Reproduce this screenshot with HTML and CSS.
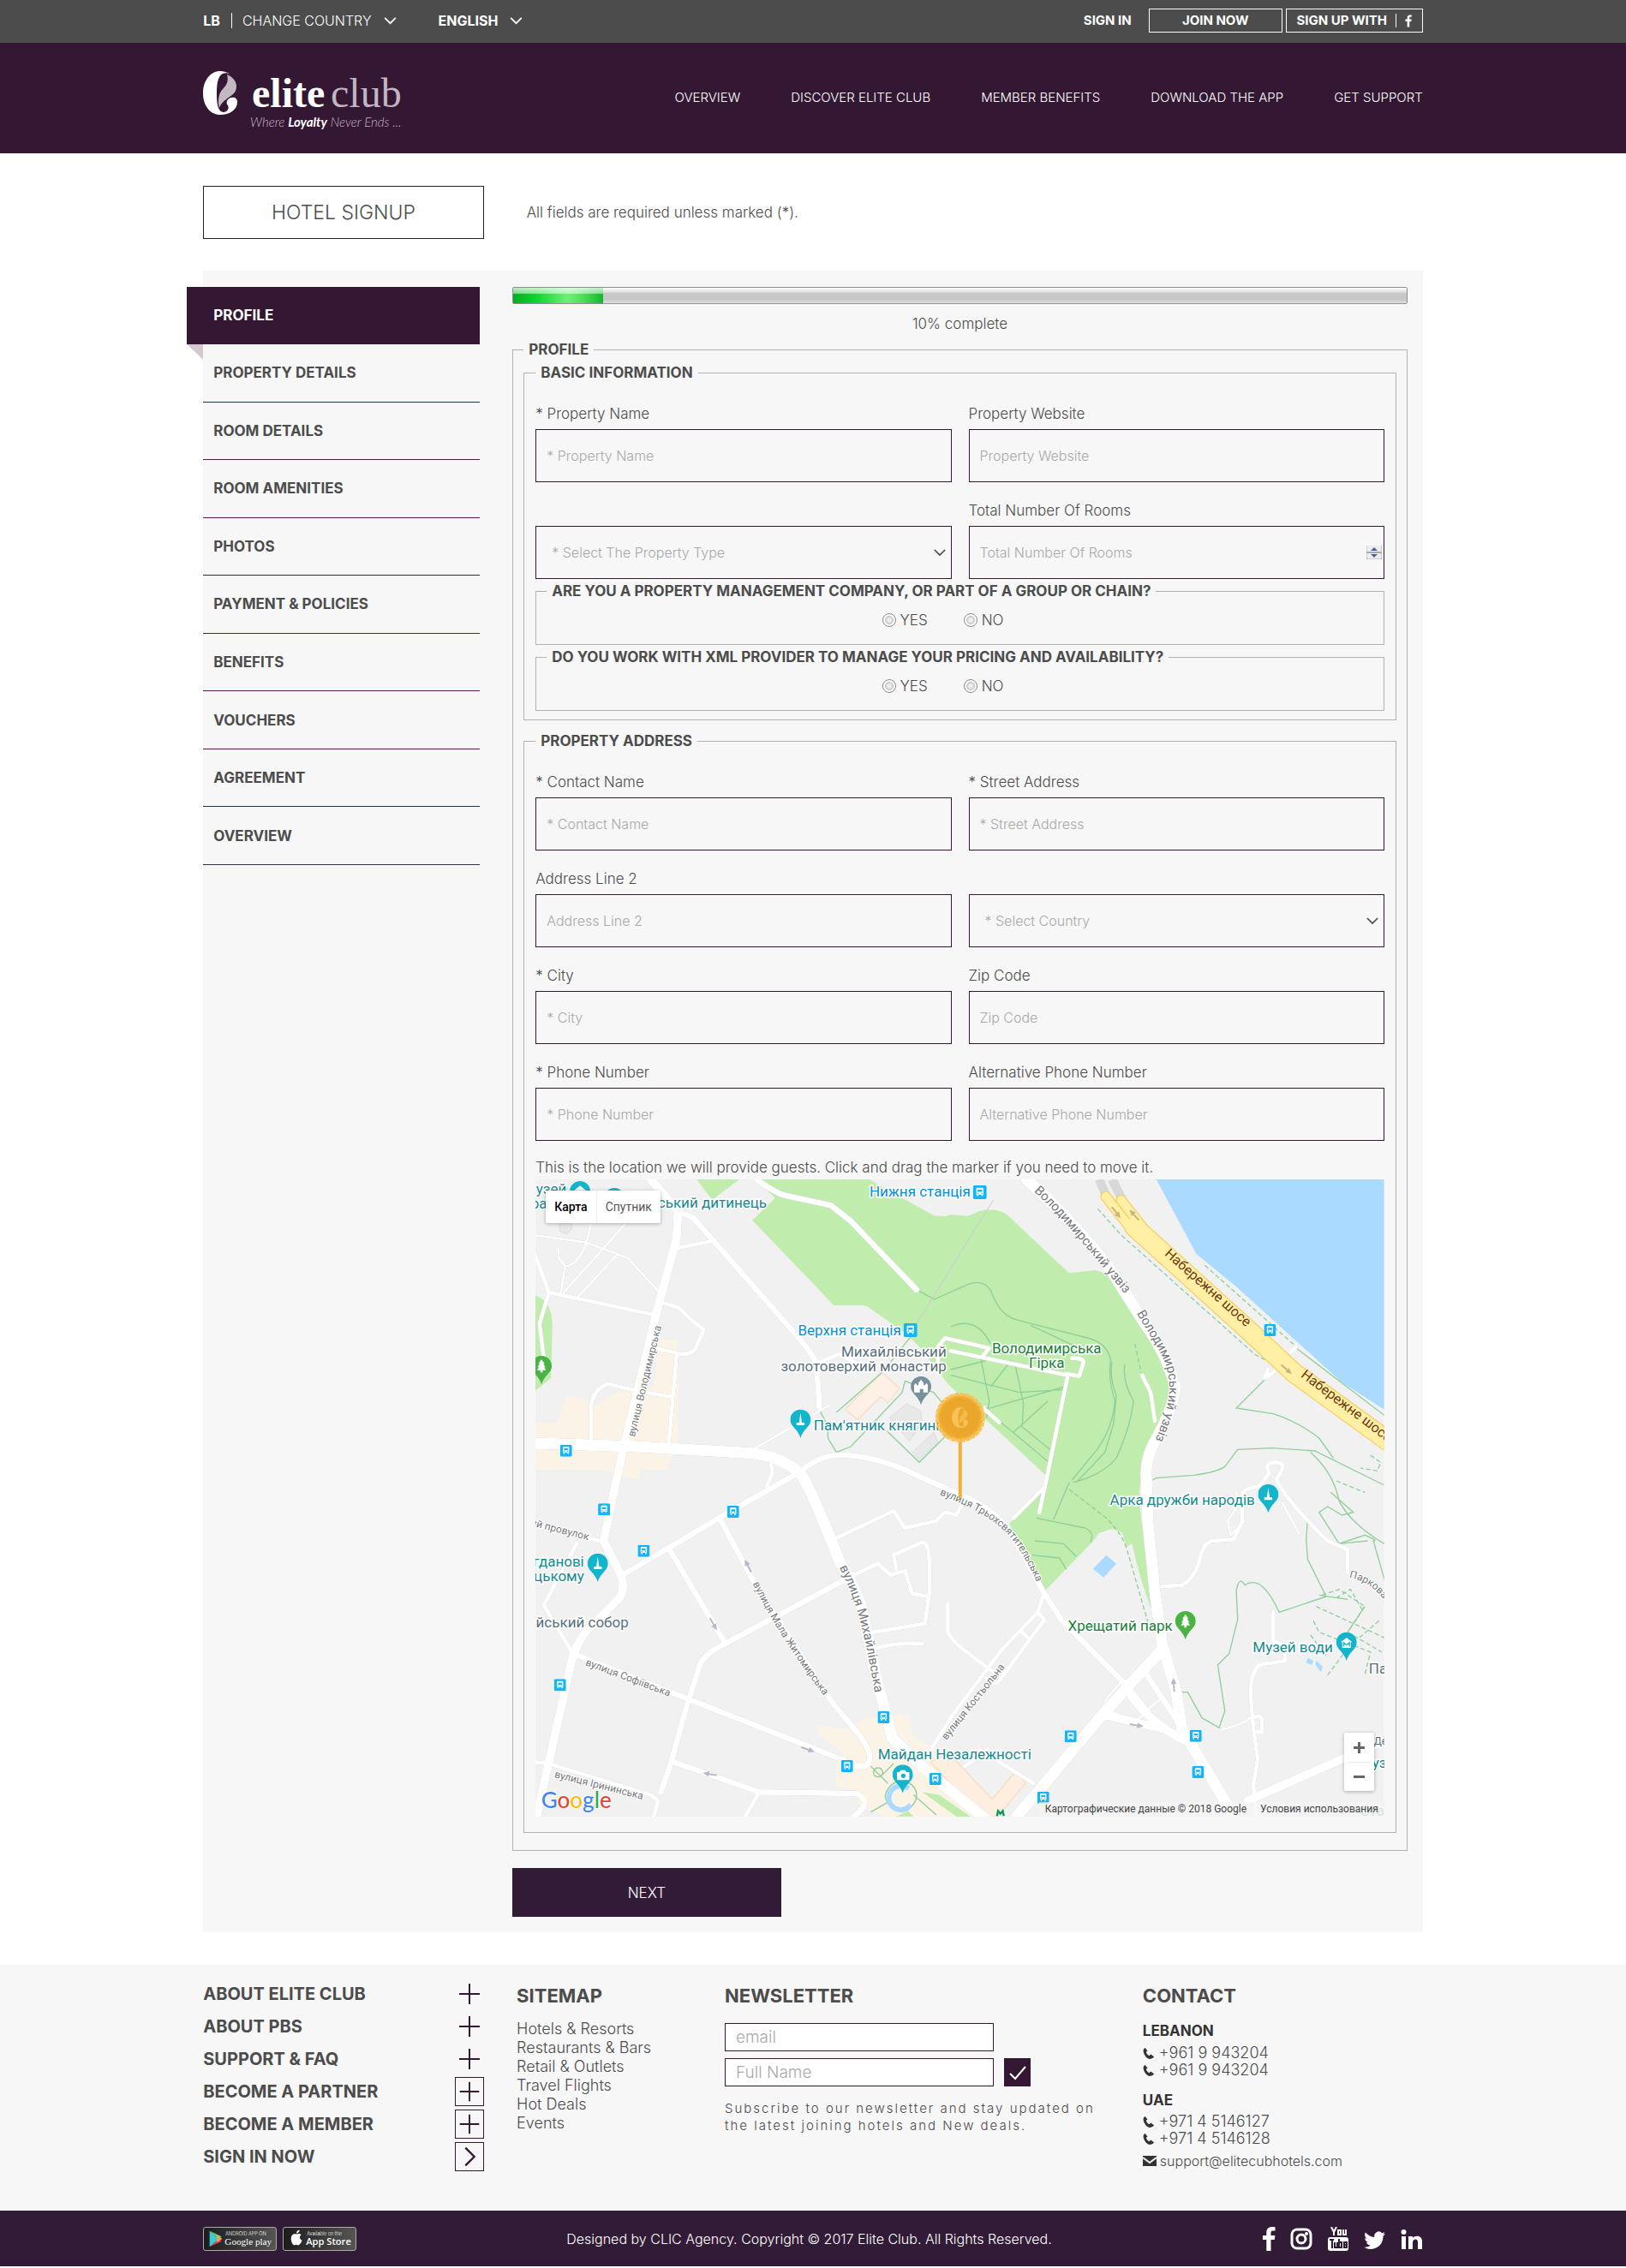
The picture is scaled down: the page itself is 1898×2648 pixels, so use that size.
FILE: index.html
```html
<!DOCTYPE html>
<html lang="en">
<head>
<meta charset="utf-8">
<title>Elite Club - Hotel Signup</title>
<meta name="viewport" content="width=device-width, initial-scale=1">
<link rel="stylesheet" href="styles.css">
</head>
<body>
<svg class="defs" aria-hidden="true">
  <defs>
    <symbol id="chevron" viewBox="0 0 16 10"><path d="M1 1l7 7 7-7" fill="none" stroke="currentColor" stroke-width="2"/></symbol>
    <symbol id="mark" viewBox="0 0 41 51">
      <path d="M32 4C28 1 24 0 20 0 8 0 0 12 0 26c0 14 8 25 20 25 11 0 20-6 20-15 0-4-3-6-7-5-5 1-7 6-4 9 2 4-1 8-5 8-7 0-8-11-8-22 0-10 1-20 7-23 3-1 6-1 9 1z" fill="currentColor"/>
      <path d="M28 4c7 3 11 8 11 14 0 8-6 10-12 15-4 3-7 6-8 10-2-8-1-17 4-22 5-5 7-10 5-17z" fill="currentColor" opacity=".7"/>
    </symbol>
    <symbol id="facebook" viewBox="0 0 16 28"><path d="M15.500.2v4.400h-2.600c-2 0-2.400 1-2.400 2.400v3.100h4.900l-.7 5h-4.200V28H5.300V15.100H1v-5h4.300V6.500C5.300 2.300 7.900 0 11.700 0c1.800 0 3.300.1 3.800.2z" fill="currentColor"/></symbol>
    <symbol id="plus" viewBox="0 0 34 34"><path d="M17 5v24M5 17h24" fill="none" stroke="currentColor" stroke-width="2"/></symbol>
    <symbol id="arrow" viewBox="0 0 34 34"><path d="M12 6l11 11-11 11" fill="none" stroke="currentColor" stroke-width="2.500"/></symbol>
    <symbol id="phone" viewBox="0 0 14 14"><path d="M3 0C1 1 0 3 1 6c1 4 4 7 7 8 3 0 5-1 6-3l-4-3-2 2C6 9 5 7 4 5l2-1z" fill="currentColor"/></symbol>
    <symbol id="bus" viewBox="0 0 42 42">
      <rect width="42" height="42" rx="5" fill="#12b5fb"/>
      <path d="M10 10q0-3 4-3h14q4 0 4 3v18h-2v5h-4v-5H16v5h-4v-5h-2z" fill="#fff"/>
      <path d="M14 13h14v7H14z" fill="#12b5fb"/><circle cx="15" cy="24" r="2" fill="#12b5fb"/><circle cx="27" cy="24" r="2" fill="#12b5fb"/>
    </symbol>
    <symbol id="pin" viewBox="0 0 72 100"><path d="M36 0c20 0 36 16 36 36 0 25-28 32-36 64C28 68 0 61 0 36 0 16 16 0 36 0z" fill="currentColor"/></symbol>
    <symbol id="obelisk" viewBox="0 0 72 100"><use href="#pin"/><path d="M36 12l5 34h9v9H22v-9h9z" fill="#fff"/></symbol>
    <symbol id="tree" viewBox="0 0 72 100"><use href="#pin"/><path d="M36 12l11 16h-5l8 12h-5l7 10H40v8h-8v-8H20l7-10h-5l8-12h-5z" fill="#fff"/></symbol>
    <symbol id="dir" viewBox="0 0 50 20"><path d="M0 7h28V0l22 10-22 10v-7H0z" fill="currentColor"/></symbol>
  </defs>
</svg>

<div class="topbar">
  <div class="wrap topbar-row">
    <div class="locale">
      <strong>LB</strong>
      <button class="plain country" type="button">CHANGE COUNTRY <svg class="chev"><use href="#chevron"/></svg></button>
      <button class="plain language" type="button">ENGLISH <svg class="chev"><use href="#chevron"/></svg></button>
    </div>
    <div class="account">
      <a class="signin" href="#">SIGN IN</a>
      <a class="outline join" href="#">JOIN NOW</a>
      <a class="outline with" href="#">SIGN UP WITH <span class="bar"></span><svg class="fb"><use href="#facebook"/></svg></a>
    </div>
  </div>
</div>

<header class="header">
  <div class="wrap header-row">
    <a class="logo" href="#" aria-label="elite club">
      <svg viewBox="0 0 234 76">
        <use href="#mark" x="0" y="1" width="41" height="51" color="#fff"/>
        <text class="logo-elite" x="57" y="43">elite</text>
        <text class="logo-club" x="149" y="43">club</text>
        <text class="logo-tag" x="55" y="66">Where <tspan class="logo-tag-bold">Loyalty</tspan> Never Ends ...</text>
      </svg>
    </a>
    <nav class="mainnav">
      <a href="#">OVERVIEW</a>
      <a href="#">DISCOVER ELITE CLUB</a>
      <a href="#">MEMBER BENEFITS</a>
      <a href="#">DOWNLOAD THE APP</a>
      <a href="#">GET SUPPORT</a>
    </nav>
  </div>
</header>

<main class="wrap">
  <div class="intro">
    <h1>HOTEL SIGNUP</h1>
    <p>All fields are required unless marked (*).</p>
  </div>

  <div class="panel">
    <nav class="steps" aria-label="Signup steps">
      <a class="current" href="#">PROFILE</a>
      <div class="steps-rest">
        <a href="#">PROPERTY DETAILS</a>
        <a href="#">ROOM DETAILS</a>
        <a href="#">ROOM AMENITIES</a>
        <a href="#">PHOTOS</a>
        <a href="#">PAYMENT &amp; POLICIES</a>
        <a href="#">BENEFITS</a>
        <a href="#">VOUCHERS</a>
        <a href="#">AGREEMENT</a>
        <a href="#">OVERVIEW</a>
      </div>
    </nav>

    <form class="form">
      <progress id="done" value="10" max="100" aria-label="Signup progress"></progress>
      <p class="complete">10% complete</p>

      <fieldset class="outer">
        <legend>PROFILE</legend>

        <fieldset class="section basic">
          <legend>BASIC INFORMATION</legend>
          <div class="fields">
            <div class="field"><label for="pname">* Property Name</label><input id="pname" type="text" placeholder="* Property Name"></div>
            <div class="field"><label for="pweb">Property Website</label><input id="pweb" type="text" placeholder="Property Website"></div>
            <div class="field bare">
              <select id="ptype" aria-label="Property type"><option>* Select The Property Type</option></select>
              <svg class="drop"><use href="#chevron"/></svg>
            </div>
            <div class="field">
              <label for="rooms">Total Number Of Rooms</label><input id="rooms" type="number" placeholder="Total Number Of Rooms">
              <svg class="spin" viewBox="0 0 18 16"><path d="M0 0v16h18V0" fill="#eee" stroke="#aaa"/><path d="M0 8h18" stroke="#aaa" stroke-width="2"/><path d="M5 6l4-4 4 4zM5 10l4 4 4-4z" fill="#4a5aa8"/></svg>
            </div>
          </div>
          <fieldset class="question">
            <legend>ARE YOU A PROPERTY MANAGEMENT COMPANY, OR PART OF A GROUP OR CHAIN?</legend>
            <div class="choices">
              <label><input type="radio" name="group">YES</label>
              <label><input type="radio" name="group">NO</label>
            </div>
          </fieldset>
          <fieldset class="question">
            <legend>DO YOU WORK WITH XML PROVIDER TO MANAGE YOUR PRICING AND AVAILABILITY?</legend>
            <div class="choices">
              <label><input type="radio" name="xml">YES</label>
              <label><input type="radio" name="xml">NO</label>
            </div>
          </fieldset>
        </fieldset>

        <fieldset class="section address">
          <legend>PROPERTY ADDRESS</legend>
          <div class="fields">
            <div class="field"><label for="contact">* Contact Name</label><input id="contact" type="text" placeholder="* Contact Name"></div>
            <div class="field"><label for="street">* Street Address</label><input id="street" type="text" placeholder="* Street Address"></div>
            <div class="field"><label for="line2">Address Line 2</label><input id="line2" type="text" placeholder="Address Line 2"></div>
            <div class="field bare">
              <select id="country" aria-label="Country"><option>* Select Country</option></select>
              <svg class="drop"><use href="#chevron"/></svg>
            </div>
            <div class="field"><label for="city">* City</label><input id="city" type="text" placeholder="* City"></div>
            <div class="field"><label for="zip">Zip Code</label><input id="zip" type="text" placeholder="Zip Code"></div>
            <div class="field"><label for="phone1">* Phone Number</label><input id="phone1" type="tel" placeholder="* Phone Number"></div>
            <div class="field"><label for="phone2">Alternative Phone Number</label><input id="phone2" type="tel" placeholder="Alternative Phone Number"></div>
          </div>
          <p class="hint">This is the location we will provide guests. Click and drag the marker if you need to move it.</p>

          <div class="map">
            <svg class="map-art" viewBox="0 0 991 744" preserveAspectRatio="xMidYMid slice">
              <svg width="991" height="744" viewBox="45 54 2973 2232">
                <rect x="45" y="54" width="2973" height="2232" fill="#f1f1f1"/>
                <!-- commercial areas -->
                <g fill="#fbf4e6">
                  <path d="M45 905h75l35-95 80 20v25l95-55 130-20 20-165h65v360l-40 95h-95v40l-130-40H45z"/>
                  <path d="M1030 1965l100 15 70-40 155-12 10 72 100 60 200 226h-395l-90-40-20-55-60-10v-100l20-20-80-60z"/>
                </g>
                <!-- parks -->
                <g fill="#c0ecae">
                  <path d="M610 54h150l-95 71z"/>
                  <path d="M45 460q60 20 60 110l-5 180-55 45z"/>
                  <path d="M820 54H1215L1350 130 1440 180 1480 184 1500 178 1560 182 1600 165Q1660 150 1700 180L1880 350 1915 382 2005 372Q2050 380 2080 420L2140 500 2230 640Q2285 740 2260 860L2215 950Q2160 1050 2160 1180L2180 1350 2212 1585Q2160 1450 2135 1330L2115 1340 2100 1290 2065 1278 2020 1292 1995 1325 1825 1500 1785 1400 1705 1260 1830 1140 1832 1090 1500 780 1470 745 1400 650 1350 600 1210 500 1190 495H1090L1000 400 805 197 885 120z"/>
                  <path d="M1400 2200l60 10 110 76h-50zM1310 2286l40-20 20 20z"/>
                </g>
                <path d="M2220 54l140 261 140 115 370 335 148 95V54z" fill="#aadaff"/>
                <path d="M2045 1370l35 30-45 48-37-30zM2750 1730l20 10-5 15-20-8zM2780 1740l22 20-5 20-20-25z" fill="#aadaff"/>
                <!-- buildings -->
                <path d="M1130 860l130-130 60 55-40 50-25-20-80 80z" fill="#fdf1e6" stroke="#fbdcc0" stroke-width="4"/>
                <path d="M1430 2095l60-35 155 165 80-95 40 35-100 121h-60z" fill="#fdeee0" stroke="#fbdcc0" stroke-width="4"/>
                <path d="M1285 890l60-50 50 25 5 45-45 60zM1365 1010l75-70 15 35-65 60zM130 210l10-15h30l5 30-20 20-25-10z" fill="#e8e8e8" stroke="#ddd" stroke-width="3"/>
                <!-- footpaths -->
                <g fill="none" stroke="#8fcf9b" stroke-width="4">
                  <path d="M1380 440l62 34 118-52q50-20 80 20 30 90 95 105l255 65q60 20 70 75-10 70 15 140-5 90-60 170l-90 110M2065 690q-10 60 15 120l-10 100-30 100-95 100M2110 700q-10 60 30 130-10 90-60 200-50 60-150 85M1500 570q90-40 140 60M1780 565l180 85M1500 720l120-30M1500 740l240 60 160-10M1605 680l30 150-10 60M1725 700l30 140-5 80M1620 860l280-80M1640 780l70-90M1670 900l180 150M1720 940l120-110M1750 920l110 90M1100 870l160-140 120-150M1100 1010l-30-50 0-40-30-60M1100 1010l50-20 180-190 10-40 100 40 50 60M1240 900l150 145 130-130"/>
                  <path d="M2710 645l308 235M2620 735l-120 120 130 20q90 30 160 85l50 70M2200 1110l20-10 130-10q80-10 110-30l45-60 120-5 150 10 243 120M2760 1010q80 70 100 170 40 80 158 150"/>
                  <path d="M1800 1240l170 35q35 15 20 50M1795 1320l100 10 45 45M1785 1370l95 10 25 40M1860 1245l55-130M2310 1850h20l50 90 60 35 20-60-25-160 40-40 30-120-5-100q10-55 30-20 60-40 120 95l165-55-65-130-5-70 5-75M2790 1510l100 15M2890 1640l60-90M2960 1320l-100 10-70-110 30-20 50 30 40-10-80-70M2860 1330l90-30q50 20 30 20l40 140"/>
                  <path d="M1220 2110l60 60M1300 2100l-40 40M1220 2270l70-40M1370 2210l80 70M1245 2115a16 16 0 1 0 1 0M1325 2160q60 10 55 60-10 40-55 45-45-5-55-50 10-45 55-55"/>
                  <g stroke-dasharray="16 9">
                    <path d="M1915 1140l130 100q60 60 75 120l75 260M2015 157l80 90 470 420 110 60 350 270M2390 355l320 285M2145 630l25 115M2800 1510l60-20 90 60-60 90M2780 1550l240 110M2770 1600l20 40 180 70-20 80M2760 1650l60 80M2890 1640l120 70M2820 1790l60-80M3000 1600l-70 60M2850 1520l50-30 40 70M2850 1110l100 40M2970 1020l35 25-10 30-60-10"/>
                  </g>
                </g>
                <path d="M1650 125L1380 560" stroke="#ccc" stroke-width="4" opacity=".7"/>
                <!-- streets -->
                <g class="streets">
                  <g stroke-width="8"><path d="M45 250l180 25 145 55 110 120M240 210l-15 65q-30 80-75 83l-22-28-3-35M150 358l-15 92M360 210L145 450M330 320L195 465M800 1005l275-160M1590 880l30-30M2500 1150l10 40-40 60 10 50 50-50M2660 1185l60 110M2450 1980q60-10 100-40M2040 1880l60-70M2190 1910l50-40M2070 1920l60 40 60-40"/></g>
                  <g stroke-width="14"><path d="M45 320l48 130-33 110 15 120M93 450l377 80M540 295l125-25M490 485l60 20 35 35 50 40-30 70q-25 20-55 15l-80-20M540 670l-28 320M240 970v-120q10-65 60-80l100 25 120 20M1030 700l80-35 90 50M870 1040l5 45-20 45M45 1265l245 60M190 1330L75 1545l105 175M1160 1440l85-40 45 40 50-15 25 80 55 10M1310 1420l-10-50 100-45q25 0 25 75v100l-15 110-180 30M1240 1695q80-20 160-15M1100 1310l200-95 40 60 110-25 30-30 40 10 20-40M1490 1540v100q20 40 80 80l80 60"/>
                  <path d="M1825 1510l-20 60-125 130-180 240-80 130M1825 1600l-155 210q-20 20-45-10M1830 1600l-25-30M1750 1640l25 25M45 2095l45 5 360 110 25 20-15 56M830 2200l-50 86M1830 1130l80-390-410-85M1455 690v-50l25-30 155 35-25 30M1925 680q40 0 40 15l-15 48-45-8M1620 860l50 45M2170 740l30 60 15 100M1810 1220l20-90-110 110M2240 1480l70-5q40-20 60-80 15-75 50-75l70-5 30-60v-90q0-30 60-35l35-45q-20-40 25-40t0 60q40 80 180 215l70 30v80M2630 1570v100l40 20v50l-90 15q-30 30-30 100l10 120 15 110-15 90 10 110M2560 1940q30-20 30 20v30h-20M1600 2050l190 120M1550 2110l80-60M2610 720l-10 30 30-20 15-20M2690 660l20-20"/></g>
                  <g stroke-width="20"><path d="M545 165l55 25 70 80 290 330q60 70 70 100l10 150M820 54q70 50 100 56l160 35 70 55 230 240M970 1080q70-60 140-60 130 0 270 70l180 80q110 50 160 140l105 190 65 100 220 220 80 100M970 1080l-230 130-390 230M690 1240l130 240 260 400 100 120q60 80 20 110h-50M515 1350l190 320M1160 1440L710 1680q-80 40-90 80l-45 140-55 200-35 100M190 1720l380 150 560 220M530 2095l300 105 340 5q60 30-10 81M2180 1780l120 180"/></g>
                  <g stroke-width="30"><path d="M450 54l95 111-5 95-70 260-110 450-40 180-35 170 60 120q20 60-15 90l-110 110q-40 60-50 110L50 2286M2540 2230l340-150 138-60M2110 1820q40 100 190 190M2040 1930l210 50 70 40"/></g>
                  <g stroke-width="40"><path d="M45 978l355 12 390 22q100 5 180 68 30 30 140 310 60 100 80 170l50 240 55 210q130 130 330 286M1765 54q170 150 295 316l120 190q80 110 105 220 0 70-75 200-30 60-25 120l5 150 25 250 25 180 50 170 20 130 150 250 30 56M2240 1700l-210 230-200 240-100 116"/></g>
                </g>
                <!-- embankment highway -->
                <path d="M2020 54l30 70M2065 54l40 80" stroke="#d8d8d8" stroke-width="32" fill="none"/>
                <g fill="none" stroke-linecap="round" stroke-linejoin="round">
                  <path d="M2043 114l90 115M2097 127l75 95" stroke="#f9d067" stroke-width="38"/>
                  <path d="M2143 220l397 360 160 150 330 240" stroke="#f9d067" stroke-width="72"/>
                  <path d="M2043 114l90 115M2097 127l75 95" stroke="#fff0a6" stroke-width="30"/>
                  <path d="M2143 220l397 360 160 150 330 240" stroke="#fff0a6" stroke-width="64"/>
                </g>
                <path d="M1352 2188a42 42 0 1 0 8 56" fill="none" stroke="#aadaff" stroke-width="18"/>
                <g color="#b9b8cc">
                  <use href="#dir" width="50" height="20" transform="translate(630 2147) rotate(190 25 0)"/>
                  <use href="#dir" width="50" height="20" transform="translate(980 2033) rotate(20)"/>
                  <use href="#dir" width="50" height="20" transform="translate(793 1435) rotate(-118)"/>
                  <use href="#dir" width="50" height="20" transform="translate(665 1585) rotate(60)"/>
                  <use href="#dir" width="50" height="20" transform="translate(2128 1952) rotate(10)"/>
                  <use href="#dir" width="50" height="20" transform="translate(2273 1850) rotate(-94)"/>
                </g>
                <g color="#c5b582">
                  <use href="#dir" width="50" height="20" transform="translate(2072 144) rotate(52)"/>
                  <use href="#dir" width="50" height="20" transform="translate(2152 204) rotate(-132)"/>
                  <use href="#dir" width="50" height="20" transform="translate(2664 695) rotate(42)"/>
                </g>
                <!-- transit stops -->
                <g>
                  <use href="#bus" x="132" y="983" width="42" height="42"/><use href="#bus" x="265" y="1189" width="42" height="42"/>
                  <use href="#bus" x="717" y="1197" width="42" height="42"/><use href="#bus" x="404" y="1334" width="42" height="42"/>
                  <use href="#bus" x="111" y="1804" width="42" height="42"/><use href="#bus" x="1244" y="1917" width="42" height="42"/>
                  <use href="#bus" x="1116" y="2088" width="42" height="42"/><use href="#bus" x="1425" y="2133" width="42" height="42"/>
                  <use href="#bus" x="1899" y="1984" width="42" height="42"/><use href="#bus" x="2337" y="1982" width="42" height="42"/>
                  <use href="#bus" x="2345" y="2109" width="42" height="42"/><use href="#bus" x="1803" y="2198" width="42" height="42"/>
                  <use href="#bus" x="2597" y="561" width="42" height="42"/><use href="#bus" x="1335" y="558" width="48" height="48"/>
                  <use href="#bus" x="1578" y="75" width="48" height="48"/>
                </g>
                <!-- places -->
                <g color="#12b5cb">
                  <use href="#pin" x="166" y="60" width="72" height="100"/><use href="#pin" x="286" y="84" width="72" height="100"/>
                  <use href="#obelisk" x="938" y="860" width="72" height="100"/><use href="#obelisk" x="228" y="1364" width="72" height="100"/>
                  <use href="#obelisk" x="2576" y="1122" width="72" height="100"/><use href="#pin" x="2850" y="1640" width="72" height="100"/>
                  <use href="#pin" x="1296" y="2104" width="72" height="100"/>
                </g>
                <path d="M182 92l20-16 20 16z" fill="#fff"/>
                <path d="M2866 1675l20-16 20 16h-5v20h-30v-20zM1312 2130h8l5-7h15l5 7h10v28h-43z" fill="#fff"/>
                <path d="M2876 1690v-14l10 9 10-9v14" fill="none" stroke="#12b5cb" stroke-width="4"/><circle cx="1334" cy="2143" r="8" fill="#12b5cb"/>
                <use href="#pin" x="1360" y="744" width="72" height="100" color="#78909c"/>
                <path d="M1372 800v-25l5-8 5 8h5v-8l9-12 9 12v8h5l5-8 5 8v25h-16v-12h-12v12z" fill="#fff"/>
                <g color="#4ab343"><use href="#tree" x="31" y="672" width="72" height="100"/><use href="#tree" x="2286" y="1566" width="72" height="100"/></g>
                <path d="M1662 2284l4-18 8 10 8-10 4 18" fill="none" stroke="#00985f" stroke-width="7"/>
              </svg>

              <defs>
                <path id="st-vol" d="M116 301L150 160"/>
                <path id="st-uzviz1" d="M582 14C620 48 660 100 702 150"/>
                <path id="st-uzviz2" d="M702 156C730 205 750 220 735 275 728 295 722 305 718 330"/>
                <path id="st-nab1" d="M734 88L854 194"/>
                <path id="st-nab2" d="M893 230L1020 326"/>
                <path id="st-mykh" d="M355 453C385 510 390 570 402 628"/>
                <path id="st-mala" d="M254 472C285 535 320 580 354 626"/>
                <path id="st-sof" d="M58 567L170 609"/>
                <path id="st-iryn" d="M22 698L145 729"/>
                <path id="st-prov" d="M-6 404L80 426"/>
                <path id="st-tr" d="M472 368C540 395 560 410 592 485"/>
                <path id="st-kost" d="M480 655L564 550"/>
                <path id="st-park" d="M950 465Q980 470 998 502"/>
              </defs>
              <g class="street-names">
                <text><textPath href="#st-vol">вулиця Володимирська</textPath></text>
                <text class="st-15"><textPath href="#st-uzviz1">Володимирський узвіз</textPath></text>
                <text class="st-15"><textPath href="#st-uzviz2">Володимирський узвіз</textPath></text>
                <text class="st-road"><textPath href="#st-nab1">Набережне шосе</textPath></text>
                <text class="st-road"><textPath href="#st-nab2">Набережне шосе</textPath></text>
                <text class="st-15"><textPath href="#st-mykh">вулиця Михайлівська</textPath></text>
                <text><textPath href="#st-mala">вулиця Мала Житомирська</textPath></text>
                <text><textPath href="#st-sof">вулиця Софіївська</textPath></text>
                <text><textPath href="#st-iryn">вулиця Ірининська</textPath></text>
                <text><textPath href="#st-prov">ий провулок</textPath></text>
                <text><textPath href="#st-tr">вулиця Трьохсвятительська</textPath></text>
                <text><textPath href="#st-kost">вулиця Костьольна</textPath></text>
                <text><textPath href="#st-park">Паркова</textPath></text>
              </g>
              <g class="places">
                <g fill="#168a8f">
                  <text x="1" y="17">узей</text><text x="-5" y="34">ра</text>
                  <text x="143" y="33">ський дитинець</text>
                  <text x="325" y="293">Пам'ятник княгині</text>
                  <text x="57" y="452" text-anchor="end">гданові</text><text x="57" y="469" text-anchor="end">цькому</text>
                  <text x="840" y="380" text-anchor="end">Арка дружби народів</text>
                  <text x="931" y="552" text-anchor="end">Музей води</text>
                  <text x="400" y="677">Майдан Незалежності</text>
                  <text x="977" y="687">уз</text>
                </g>
                <g fill="#0a8ed0">
                  <text x="508" y="20" text-anchor="end">Нижня станція</text>
                  <text x="427" y="182" text-anchor="end">Верхня станція</text>
                </g>
                <g fill="#5a6f7b">
                  <text x="480" y="207" text-anchor="end">Михайлівський</text>
                  <text x="480" y="224" text-anchor="end">золотоверхий монастир</text>
                  <text x="109" y="523" text-anchor="end">йський собор</text>
                  <text x="973" y="577">Па</text><text class="st-12" x="979" y="660">Де</text>
                </g>
                <g fill="#188038">
                  <text x="597" y="203" text-anchor="middle">Володимирська</text><text x="597" y="220" text-anchor="middle">Гірка</text>
                  <text x="744" y="527" text-anchor="end">Хрещатий парк</text>
                  <text x="963" y="743" opacity=".5">Ста</text>
                </g>
              </g>
              <text class="google" x="7" y="734"><tspan fill="#4285f4">G</tspan><tspan fill="#ea4335">o</tspan><tspan fill="#fbbc05">o</tspan><tspan fill="#4285f4">g</tspan><tspan fill="#34a853">l</tspan><tspan fill="#ea4335">e</tspan></text>
              <g>
                <path d="M496 300v72" stroke="#f0b03a" stroke-width="4"/>
                <circle cx="496" cy="278" r="27" fill="#efaf36" stroke="#f8c257" stroke-width="4" stroke-dasharray="5 1"/>
                <circle cx="496" cy="278" r="23" fill="#eba72c"/>
                <use href="#mark" x="486" y="266" width="20" height="24" color="#f8c257"/>
              </g>
            </svg>
            <div class="map-type"><button type="button" class="on">Карта</button><button type="button">Спутник</button></div>
            <div class="map-zoom"><button type="button" aria-label="Zoom in"><svg viewBox="0 0 13 13"><path d="M0 6.500h13M6.500 0v13"/></svg></button><button type="button" aria-label="Zoom out"><svg viewBox="0 0 13 13"><path d="M0 6.500h13"/></svg></button></div>
            <div class="map-legal"><span>Картографические данные © 2018 Google</span><a href="#">Условия использования</a></div>
          </div>
        </fieldset>
      </fieldset>
      <button class="next" type="submit">NEXT</button>
    </form>
  </div>
</main>

<footer>
  <div class="foot-main">
    <div class="wrap foot-grid">
      <ul class="accordion">
        <li><a href="#">ABOUT ELITE CLUB <svg><use href="#plus"/></svg></a></li>
        <li><a href="#">ABOUT PBS <svg><use href="#plus"/></svg></a></li>
        <li><a href="#">SUPPORT &amp; FAQ <svg><use href="#plus"/></svg></a></li>
        <li><a href="#">BECOME A PARTNER <svg class="boxed"><use href="#plus"/></svg></a></li>
        <li><a href="#">BECOME A MEMBER <svg class="boxed"><use href="#plus"/></svg></a></li>
        <li><a href="#">SIGN IN NOW <svg class="boxed"><use href="#arrow"/></svg></a></li>
      </ul>
      <div class="sitemap">
        <h2>SITEMAP</h2>
        <ul>
          <li><a href="#">Hotels &amp; Resorts</a></li>
          <li><a href="#">Restaurants &amp; Bars</a></li>
          <li><a href="#">Retail &amp; Outlets</a></li>
          <li><a href="#">Travel Flights</a></li>
          <li><a href="#">Hot Deals</a></li>
          <li><a href="#">Events</a></li>
        </ul>
      </div>
      <form class="newsletter">
        <h2>NEWSLETTER</h2>
        <input type="email" placeholder="email" aria-label="Email">
        <div class="send">
          <input type="text" placeholder="Full Name" aria-label="Full name">
          <button type="submit" aria-label="Subscribe"><svg viewBox="0 0 20 18"><path d="M1 10l6 6L19 2" fill="none" stroke="#fff" stroke-width="2"/></svg></button>
        </div>
        <p>Subscribe to our newsletter and stay updated on the latest joining hotels and New deals.</p>
      </form>
      <div class="contact">
        <h2>CONTACT</h2>
        <h3>LEBANON</h3>
        <a href="#"><svg><use href="#phone"/></svg>+961 9 943204</a>
        <a href="#"><svg><use href="#phone"/></svg>+961 9 943204</a>
        <h3>UAE</h3>
        <a href="#"><svg><use href="#phone"/></svg>+971 4 5146127</a>
        <a href="#"><svg><use href="#phone"/></svg>+971 4 5146128</a>
        <a class="mail" href="#"><svg viewBox="0 0 16 12"><path d="M0 0h16v12H0z" fill="currentColor"/><path d="M0 2l8 6 8-6" fill="none" stroke="#f7f7f7" stroke-width="2"/></svg>support@elitecubhotels.com</a>
      </div>
    </div>
  </div>
  <div class="foot-bar">
    <div class="wrap foot-row">
      <div class="stores">
        <a href="#" aria-label="Android app on Google play">
          <svg viewBox="0 0 86 28"><path d="M5 4l12 10L5 24z" fill="#3bccd0"/><path d="M5 4l12 10 3-3z" fill="#7ad06d"/><path d="M5 24l12-10 3 3z" fill="#e5405e"/><path d="M14 10l7 4-7 4z" fill="#f5a04a"/>
          <text class="badge-small" x="25" y="10">ANDROID APP ON</text><text class="badge-serif" x="24" y="22">Google play</text></svg>
        </a>
        <a href="#" aria-label="Available on the App Store">
          <svg viewBox="0 0 86 28"><path d="M15 8c3-1 4 0 5 1-3 2-2 6 1 7-1 3-3 6-5 6-2-1-3-1-5 0-3-1-5-8-3-12 2-3 4-2 7-2zM14 7c0-2 1-4 4-4 0 2-2 4-4 4z" fill="#fff"/>
          <text class="badge-small" x="27" y="10">Available on the</text><text class="badge-sans" x="26" y="22">App Store</text></svg>
        </a>
      </div>
      <p>Designed by CLIC Agency. Copyright © 2017 Elite Club. All Rights Reserved.</p>
      <div class="social">
        <a class="slim" href="#" aria-label="Facebook"><svg viewBox="0 0 16 28"><use href="#facebook"/></svg></a>
        <a href="#" aria-label="Instagram"><svg viewBox="0 0 26 28"><rect x="2" y="3" width="22" height="22" rx="6" fill="none" stroke="currentColor" stroke-width="3"/><circle cx="13" cy="14" r="5" fill="none" stroke="currentColor" stroke-width="3"/><circle cx="19" cy="8" r="2" fill="currentColor"/></svg></a>
        <a href="#" aria-label="YouTube"><svg viewBox="0 0 26 28"><rect x="1" y="12" width="24" height="16" rx="3" fill="currentColor"/><g fill="none" stroke="currentColor" stroke-width="2"><path d="M5 0l3 6v4M11 0L8 6M13 4h3v5h-3zM19 3v6h3V3"/></g><g fill="none" stroke="#321b37" stroke-width="2"><path d="M3 15h5M6 15v10M9 18v6h3v-6M14 14v10h3v-6h-3M23 22v2h-3v-6h3v3h-3"/></g></svg></a>
        <a href="#" aria-label="Twitter"><svg viewBox="0 0 26 28"><path d="M25 8c-1 .5-1.900.7-2.900.8 1-.6 1.800-1.600 2.200-2.800-1 .6-2 1-3.200 1.200A5.100 5.100 0 0 0 12.400 12C8.200 11.800 4.400 9.700 1.900 6.600c-1.400 2.300-.7 5.400 1.600 6.900-.8 0-1.600-.3-2.300-.6 0 2.400 1.700 4.600 4.100 5.100-.8.200-1.600.2-2.300.1.600 2 2.500 3.500 4.800 3.500A10.300 10.300 0 0 1 .200 23.700 14.600 14.600 0 0 0 22.500 10.800C23.500 10 24.300 9.100 25 8z" fill="currentColor"/></svg></a>
        <a href="#" aria-label="LinkedIn"><svg viewBox="0 0 26 28"><path d="M1 11h5v15H1zM9 11h5v2c2-3 11-4 11 4v9h-5v-8c0-5-6-4-6 0v8H9z" fill="currentColor"/><circle cx="3.500" cy="6" r="3" fill="currentColor"/></svg></a>
      </div>
    </div>
  </div>
</footer>
</body>
</html>
```

FILE: styles.css
```css
* { box-sizing: border-box; }

body {
  margin: 0;
  background: #fff;
  color: #4c4c4c;
  font: 300 17px/22px Inter, "Open Sans", sans-serif;
}

a { color: inherit; text-decoration: none; }
p, h1, h2, h3, ul { margin: 0; padding: 0; font-weight: 300; }
ul { list-style: none; }
button, input, select { font: inherit; color: inherit; border-radius: 0; }
button { cursor: pointer; }
svg { display: block; }
.defs { position: absolute; width: 0; height: 0; }
.wrap { width: 75%; margin: 0 auto; }

/* top bar */
.topbar { background: #4c4c4c; color: #fff; font-size: 15px; }
.topbar-row, .locale, .account { display: flex; align-items: center; }
.topbar-row { height: 50px; justify-content: space-between; padding-bottom: 2px; }
.locale { font-size: 16px; }
.topbar strong, .language, .account { font-weight: 700; }
.plain { display: flex; align-items: center; gap: 14px; padding: 0; border: 0; background: none; color: #fff; }
.country { margin-left: 13px; padding-left: 12px; border-left: 1px solid #fff; font-weight: 300; line-height: 18px; }
.language { margin-left: 49px; font-weight: 700; }
.chev { width: 15px; height: 9px; }
.outline { display: flex; align-items: center; justify-content: center; height: 28px; border: 1px solid #fff; }
.signin { margin-right: 20px; }
.join { width: 156px; margin-right: 4px; }
.with { width: 160px; gap: 10px; }
.bar { width: 1px; height: 16px; background: #fff; }
.fb { width: 8px; height: 15px; }

/* header */
.header { background: #331733; color: #fff; }
.header-row { display: flex; align-items: center; justify-content: space-between; height: 129px; }
.logo svg { width: 234px; height: 76px; margin-top: 10px; }
.logo-elite, .logo-club { font-family: "Liberation Serif", serif; font-size: 48px; fill: #fff; }
.logo-elite { font-weight: 700; }
.logo-club { fill: #c3b6c3; }
.logo-tag { font: italic 300 15px Lato, sans-serif; fill: #c3b6c3; }
.logo-tag-bold { font-weight: 700; fill: #fff; }
.mainnav { display: flex; gap: 59px; padding-bottom: 2px; font-size: 15px; }

/* intro */
.intro { display: flex; align-items: center; gap: 50px; padding: 38px 0 37px; }
h1 { width: 23%; border: 1px solid #222; font-size: 23px; line-height: 60px; text-align: center; }

/* panel */
.panel { display: flex; align-items: flex-start; gap: 38px; padding: 19px 18px 18px 0; background: #f7f7f7; }
.steps { width: 323px; flex: none; font-weight: 700; }
.current { position: relative; display: block; margin-left: -19px; padding-left: 31px; background: #331733; color: #fff; line-height: 67px; }
.current::after { content: ""; position: absolute; left: 0; top: 100%; width: 19px; height: 18px; background: #d4c9d3; clip-path: polygon(0 0, 100% 0, 100% 100%); }
.steps-rest { display: grid; grid-template-rows: repeat(9, 1fr); min-height: 608px; }
.steps-rest a { display: flex; align-items: center; padding-left: 12px; border-bottom: 1px solid #4f1b4f; }

.form { flex: 1; min-width: 0; }
progress { display: block; width: 100%; height: 20px; border: 1px solid #8f8f8f; border-radius: 2px; appearance: none; background: #ccc; }
progress::-webkit-progress-bar { background: linear-gradient(#fff, #dcdcdc 30%, #c8c8c8 35%, #c8c8c8 80%, #e0e0e0); }
progress::-webkit-progress-value { background: linear-gradient(rgba(255,255,255,.75), rgba(255,255,255,.5) 36%, transparent 38%), linear-gradient(90deg, #08ac26, #0cd42c 25%, #6fee78 60%, #55e060 75%, #10b82c); }
.complete { padding: 12px 0 9px; text-align: center; }

fieldset { min-width: 0; margin: 0; padding: 0; border: 1px solid #b2b0b5; }
legend { padding: 0 6px; font-size: 17px; font-weight: 700; line-height: 20px; }
.outer { padding: 7px 12px 20px; }
.section { padding: 27px 13px 10px; }
.address { margin-top: 14px; padding-bottom: 18px; }
.question > legend { margin-left: 12px; }
.fields { display: grid; grid-template-columns: 1fr 1fr; gap: 22px 20px; }
.field { position: relative; display: flex; flex-direction: column; gap: 7px; }
.bare { justify-content: flex-end; }
.field input, .field select { width: 100%; height: 62px; padding: 0 12px 1px; border: 1px solid #331733; background: transparent; font-size: 16px; appearance: none; outline: 0; }
.field select { padding-left: 18px; color: #a9a9a9; }
::placeholder { color: #a9a9a9; opacity: 1; }
.field input::-webkit-inner-spin-button { appearance: none; }
.drop { position: absolute; right: 7px; bottom: 26px; width: 14px; height: 9px; pointer-events: none; }
.spin { position: absolute; right: 3px; bottom: 23px; width: 18px; height: 16px; }

.question { margin-top: 4px; padding: 13px 0 17px; }
.choices { display: flex; justify-content: center; gap: 42px; padding-right: 40px; }
.choices label { display: flex; align-items: center; gap: 5px; }
.choices input { width: 16px; height: 16px; margin: 0; border: 1px solid #888; border-radius: 50%; appearance: none; background: radial-gradient(circle closest-side, #eee 30%, #c4c4c8 65%, #fff 75%); }

.hint { padding-top: 20px; margin-bottom: 3px; }

/* map */
.map { position: relative; height: 744px; overflow: hidden; font-family: Roboto, sans-serif; font-weight: 400; }
.map-art { width: 100%; height: 100%; }
.streets { fill: none; stroke: #fff; stroke-linejoin: round; stroke-linecap: round; filter: drop-shadow(0 0 2px #bbb); }
.street-names { font-size: 12px; fill: #75797c; stroke: #fff; stroke-width: 2px; paint-order: stroke; }
.st-12 { font-size: 12px; }
.st-15 { font-size: 15px; }
.st-road { font-size: 16px; fill: #6b3a10; stroke: #fff0a6; }
.places { font-size: 17px; stroke: #fff; stroke-width: 3px; paint-order: stroke; }
.google { font: 500 26px Lato, sans-serif; stroke: #fff; stroke-width: 2px; paint-order: stroke; }
.map-type, .map-zoom { position: absolute; display: flex; background: #fff; border-radius: 2px; box-shadow: 0 1px 4px rgba(0,0,0,.3); }
.map-type { left: 12px; top: 13px; height: 38px; }
.map-type button { padding: 0 10px; border: 0; background: none; color: #565656; font-size: 14px; }
.map-type button + button { border-left: 1px solid #eee; }
.map-type .on { color: #000; font-weight: 500; }
.map-zoom { right: 12px; bottom: 30px; width: 35px; flex-direction: column; padding: 0 5px; }
.map-zoom button { display: flex; align-items: center; justify-content: center; height: 34px; padding: 0; border: 0; background: none; }
.map-zoom button + button { border-top: 1px solid #e6e6e6; }
.map-zoom svg { width: 13px; height: 13px; stroke: #666; stroke-width: 3; }
.map-legal { position: absolute; right: 0; bottom: 0; display: flex; gap: 16px; padding: 0 7px; background: rgba(245,245,245,.7); color: #444; font-size: 12px; line-height: 17px; }

.next { display: block; width: 30%; height: 57px; margin-top: 20px; border: 0; background: #311b37; color: #fff; font-size: 17px; font-weight: 300; }

/* footer */
.foot-main { margin-top: 38px; min-height: 287px; background: #f7f7f7; }
.foot-grid { display: grid; grid-template-columns: 366fr 243fr 488fr 327fr; padding: 17px 0 40px; }
.accordion { padding-right: 38px; font-size: 20px; }
.accordion a { display: flex; align-items: center; justify-content: space-between; height: 34px; margin-bottom: 4px; font-weight: 700; }
.accordion svg { width: 34px; height: 34px; color: #331733; }
.boxed { border: 1px solid #331733; }
h2 { padding-top: 7px; font-size: 22px; font-weight: 700; line-height: 24px; }
.sitemap ul { margin-top: 16px; font-size: 18px; }
.newsletter h2 { margin-bottom: 20px; }
.newsletter input { display: block; width: 314px; height: 33px; padding: 0 12px; border: 1px solid #331733; background: #fff; font-size: 19px; }
.send { display: flex; gap: 12px; margin-top: 8px; }
.send button { display: flex; align-items: center; justify-content: center; width: 31px; height: 33px; padding: 0; border: 0; background: #331733; }
.send svg { width: 20px; height: 18px; }
.newsletter p { max-width: 455px; margin-top: 16px; font-size: 15px; line-height: 20px; letter-spacing: 2px; }
.contact h2 { margin-bottom: 18px; }
.contact h3 { margin-bottom: 5px; color: #333; font-size: 17px; font-weight: 700; line-height: 22px; }
.contact a { display: flex; align-items: center; gap: 6px; font-size: 18px; line-height: 20px; }
.contact svg { width: 13px; height: 13px; color: #333; }
.contact a + h3 { margin-top: 14px; margin-bottom: 4px; }
.contact .mail { gap: 4px; margin-top: 6px; font-size: 16px; }
.contact .mail svg { width: 16px; height: 12px; }
.foot-bar { background: #321b37; color: #fff; }
.foot-row { display: flex; align-items: center; justify-content: space-between; height: 65px; font-size: 16px; }
.stores { display: flex; gap: 7px; }
.stores a { width: 86px; height: 28px; border: 1px solid #aaa; border-radius: 3px; background: linear-gradient(90deg, #1c1c1c, #555); }
.stores svg { width: 100%; height: 100%; fill: #fff; }
.badge-small { font-size: 6px; }
.badge-serif { font: 400 12px "Liberation Serif", serif; }
.badge-sans { font: 600 12px "Open Sans", sans-serif; }
.social { display: flex; align-items: center; gap: 17px; }
.social svg { width: 26px; height: 28px; }
.social .slim svg { width: 16px; }
```
